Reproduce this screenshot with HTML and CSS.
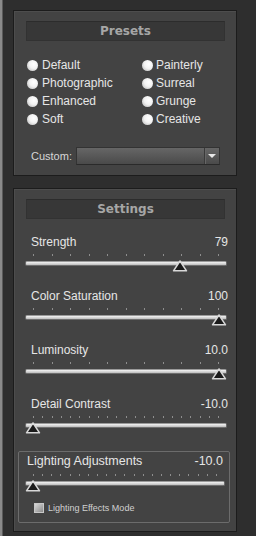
FILE: index.html
```html
<!DOCTYPE html>
<html lang="en">
<head>
    <meta charset="UTF-8">
    <meta name="viewport" content="width=device-width, initial-scale=1.0">
    <title>Presets</title>
    <link rel="stylesheet" href="styles.css">
</head>
<body>

    <!-- Presets -->
    <div class="panel presets">
        <div class="panel-title">Presets</div>
        <div class="radios">
            <label class="radio"><span class="dot"></span>Default</label>
            <label class="radio"><span class="dot"></span>Painterly</label>
            <label class="radio"><span class="dot"></span>Photographic</label>
            <label class="radio"><span class="dot"></span>Surreal</label>
            <label class="radio"><span class="dot"></span>Enhanced</label>
            <label class="radio"><span class="dot"></span>Grunge</label>
            <label class="radio"><span class="dot"></span>Soft</label>
            <label class="radio"><span class="dot"></span>Creative</label>
        </div>
        <div class="custom">
            <span class="custom-label">Custom:</span>
            <div class="select">
                <div class="select-value"></div>
                <div class="select-arrow"></div>
            </div>
        </div>
    </div>

    <!-- Settings -->
    <div class="panel settings">
        <div class="panel-title">Settings</div>

        <div class="slider">
            <div class="slider-head"><span>Strength</span><span>79</span></div>
            <div class="ticks"><i></i><i></i><i></i><i></i><i></i><i></i><i></i><i></i><i></i><i></i><i></i></div>
            <div class="track">
                <div class="track-bar"></div>
                <div class="range">
                    <svg class="thumb" style="left:79%" width="16" height="12" viewBox="0 0 16 12"><path d="M8 1 L14.5 10.8 L1.5 10.8 Z" /></svg>
                </div>
            </div>
        </div>

        <div class="slider">
            <div class="slider-head"><span>Color Saturation</span><span>100</span></div>
            <div class="ticks"><i></i><i></i><i></i><i></i><i></i><i></i><i></i><i></i><i></i><i></i><i></i></div>
            <div class="track">
                <div class="track-bar"></div>
                <div class="range">
                    <svg class="thumb" style="left:100%" width="16" height="12" viewBox="0 0 16 12"><path d="M8 1 L14.5 10.8 L1.5 10.8 Z" /></svg>
                </div>
            </div>
        </div>

        <div class="slider">
            <div class="slider-head"><span>Luminosity</span><span>10.0</span></div>
            <div class="ticks"><i></i><i></i><i></i><i></i><i></i><i></i><i></i><i></i><i></i><i></i><i></i></div>
            <div class="track">
                <div class="track-bar"></div>
                <div class="range">
                    <svg class="thumb" style="left:100%" width="16" height="12" viewBox="0 0 16 12"><path d="M8 1 L14.5 10.8 L1.5 10.8 Z" /></svg>
                </div>
            </div>
        </div>

        <div class="slider">
            <div class="slider-head"><span>Detail Contrast</span><span>-10.0</span></div>
            <div class="ticks"><i></i><i></i><i></i><i></i><i></i><i></i><i></i><i></i><i></i><i></i><i></i><i></i><i></i><i></i><i></i><i></i><i></i><i></i><i></i><i></i><i></i></div>
            <div class="track">
                <div class="track-bar"></div>
                <div class="range">
                    <svg class="thumb" style="left:0%" width="16" height="12" viewBox="0 0 16 12"><path d="M8 1 L14.5 10.8 L1.5 10.8 Z" /></svg>
                </div>
            </div>
        </div>

        <div class="group">
            <div class="slider">
                <div class="slider-head"><span>Lighting Adjustments</span><span>-10.0</span></div>
                <div class="ticks"><i></i><i></i><i></i><i></i><i></i><i></i><i></i><i></i><i></i><i></i><i></i><i></i><i></i><i></i><i></i><i></i><i></i><i></i><i></i><i></i><i></i></div>
                <div class="track">
                    <div class="track-bar"></div>
                    <div class="range">
                        <svg class="thumb" style="left:0%" width="16" height="12" viewBox="0 0 16 12"><path d="M8 1 L14.5 10.8 L1.5 10.8 Z" /></svg>
                    </div>
                </div>
            </div>
            <label class="check"><span class="box"></span>Lighting Effects Mode</label>
        </div>
    </div>

</body>
</html>
```

FILE: styles.css
```css
html {
    background: #2e2e2e;
}
body {
    margin: 0;
    min-height: 536px;
    padding: 10px 0 0 11px;
    box-sizing: border-box;
    border-left: 2px solid #8a8a8a;
    box-shadow: inset 1px 0 #5a5a5a;
    font-family: "Liberation Sans", Arial, sans-serif;
    font-size: 12px;
    color: #e6e6e6;
}
.panel {
    width: 224px;
    box-sizing: border-box;
    background: #434343;
    border: 1px solid #1c1c1c;
    box-shadow: inset 1px 1px #4d4d4d;
    padding: 10px 11px 10px 12px;
}
.settings {
    margin-top: 12px;
    padding-top: 10px;
    padding-bottom: 8px;
}
.panel-title {
    height: 20px;
    box-sizing: border-box;
    background: #373737;
    border: 1px solid #323232;
    border-top-color: #2c2c2c;
    font-family: "DejaVu Sans", Verdana, sans-serif;
    font-weight: bold;
    font-size: 12px;
    line-height: 18px;
    text-align: center;
    color: #a6a6a6;
}

/* presets */
.radios {
    display: grid;
    grid-template-columns: 115px 1fr;
    margin-top: 15px;
    padding-left: 1px;
}
.radio {
    display: flex;
    align-items: center;
    height: 18px;
    gap: 4px;
    white-space: nowrap;
}
.radios .radio:nth-child(even) {
    gap: 3px;
}
.dot {
    width: 11px;
    height: 11px;
    border-radius: 50%;
    background: radial-gradient(circle at 62% 38%, #ffffff 0%, #f2f2f2 45%, #c8c8c8 80%, #8c8c8c 100%);
}
.custom {
    display: flex;
    align-items: center;
    margin-top: 19px;
    padding: 0 5px 0 5px;
}
.custom-label {
    font-size: 11px;
    color: #d6d6d6;
}
.select {
    display: flex;
    margin-left: auto;
    width: 144px;
    height: 18px;
    box-sizing: border-box;
    border: 1px solid #333;
    border-bottom-color: #2a2a2a;
    background: linear-gradient(#666666, #4a4a4a);
}
.select-value {
    flex: 1;
}
.select-arrow {
    width: 14px;
    border-left: 1px solid #3a3a3a;
    box-shadow: inset 1px 0 #666;
    position: relative;
}
.select-arrow::after {
    content: "";
    position: absolute;
    left: 3px;
    top: 6px;
    border-left: 4px solid transparent;
    border-right: 4px solid transparent;
    border-top: 4px solid #e8e8e8;
}

/* sliders */
.slider {
    margin: 15px -2px 0 -1px;
}
.slider-head {
    display: flex;
    justify-content: space-between;
    height: 16px;
    line-height: 16px;
    padding-left: 6px;
    margin-right: -1px;
}
.ticks {
    display: flex;
    justify-content: space-between;
    margin: 4px 8px 0 8px;
    height: 2px;
}
.ticks i {
    width: 1px;
    height: 2px;
    background: #8e8e8e;
}
.track {
    position: relative;
    height: 12px;
    margin-top: 5px;
}
.track-bar {
    height: 5px;
    margin-top: 3px;
    box-sizing: border-box;
    border-radius: 2px;
    background: linear-gradient(#f4f4f4, #bcbcbc);
    border: 1px solid #6e6e6e;
    border-top-color: #9a9a9a;
}
.range {
    position: absolute;
    top: 0;
    bottom: 0;
    left: 8px;
    right: 8px;
}
.thumb {
    position: absolute;
    top: -1px;
    transform: translateX(-50%);
}
.thumb path {
    fill: #1a1a1a;
    stroke: #d8d8d8;
    stroke-width: 1.5;
    stroke-linejoin: round;
}

/* lighting group */
.group {
    margin: 16px -5px 0 -8px;
    border: 1px solid #6c6c6c;
    border-radius: 2px;
    padding: 0 4px 8px 6px;
}
.group .slider {
    margin: 0;
}
.group .slider-head {
    height: 18px;
    line-height: 18px;
    padding-left: 2px;
    margin-right: 2px;
    font-size: 12.5px;
}
.check {
    display: flex;
    align-items: center;
    gap: 4px;
    height: 12px;
    margin: 9px 0 0 9px;
    font-size: 9px;
    color: #d0d0d0;
}
.box {
    width: 10px;
    height: 10px;
    box-sizing: border-box;
    border: 1px solid #c8c8c8;
    background: linear-gradient(135deg, #d8d8d8, #8a8a8a);
}
```
